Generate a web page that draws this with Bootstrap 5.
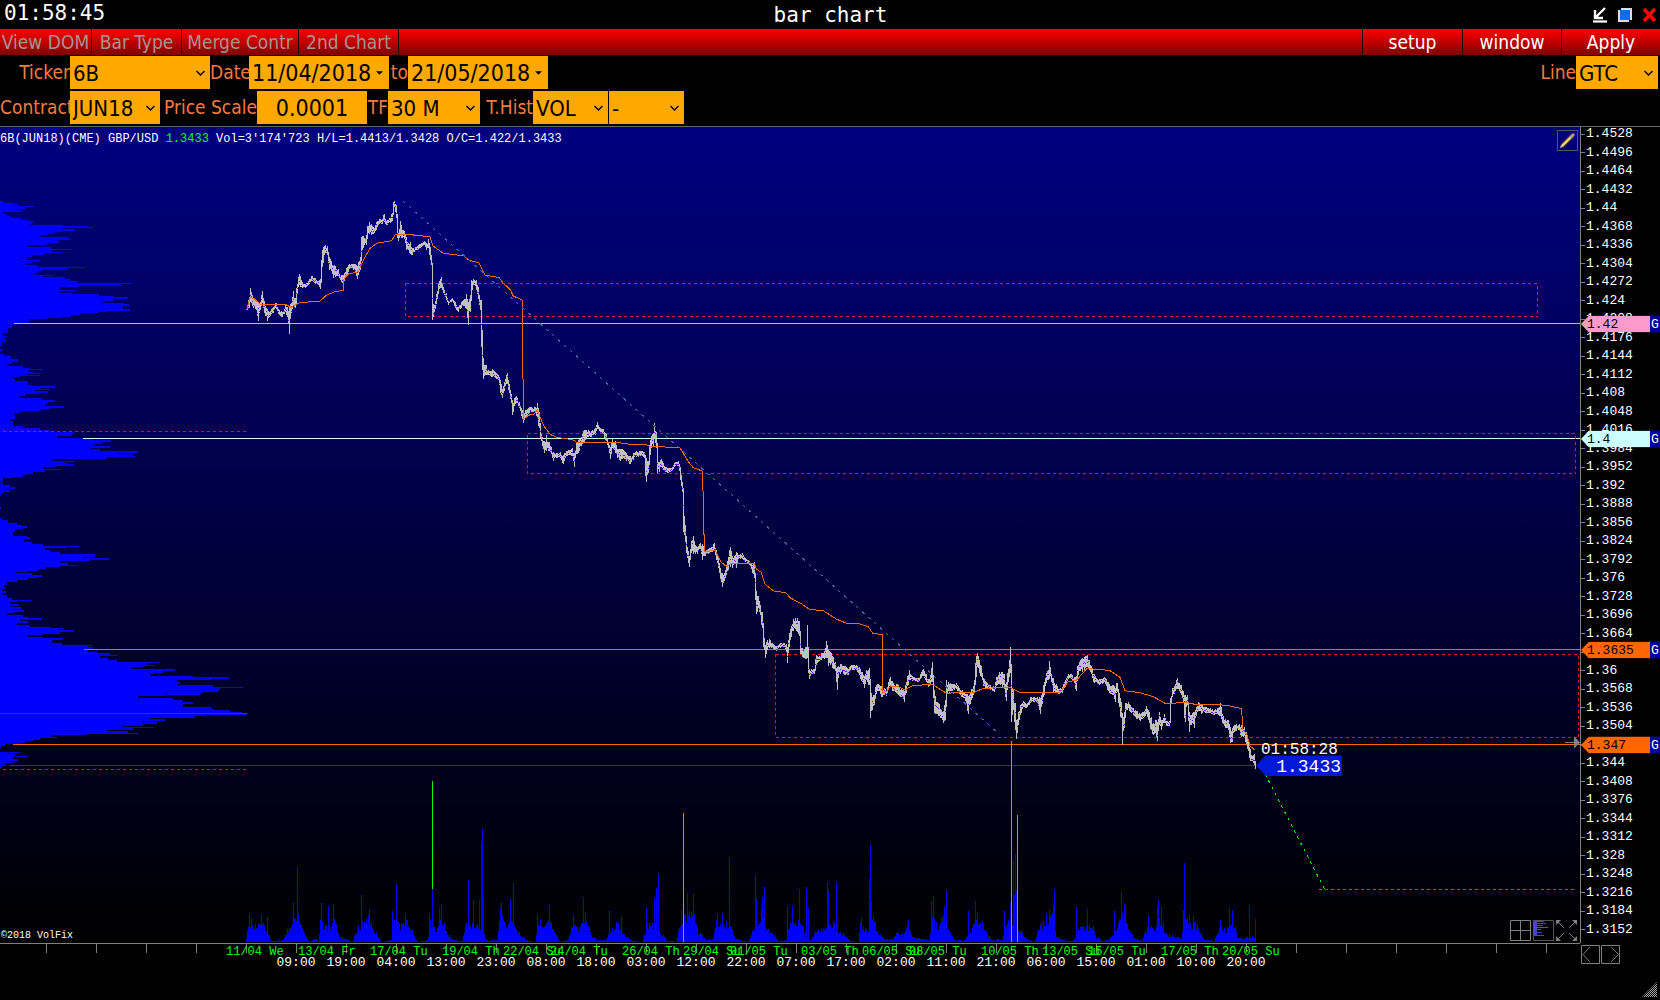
<!DOCTYPE html>
<html lang="en">
<head>
<meta charset="utf-8">
<meta name="viewport" content="width=device-width, initial-scale=1">
<title>bar chart</title>
<link href="https://cdn.jsdelivr.net/npm/bootstrap@5.3.0/dist/css/bootstrap.min.css" rel="stylesheet">
<style>
:root{--ui:"DejaVu Sans Condensed","Noto Sans",sans-serif;--mono:"Liberation Mono",monospace}
body{background:#000;color:#fff;font-family:var(--ui);font-size:19px;line-height:26px;overflow:hidden}
.title-bar{height:29px;font-family:"DejaVu Sans Mono",monospace;font-size:21px;line-height:27px}
.title-bar h1{font-size:21px;font-weight:400;line-height:30px}
.title-side{flex:1 1 0}
.win-btns{gap:10px;padding-right:3px}
.win-btn{background:none;border:0;padding:0;width:15px;height:16px;line-height:0}
.menu-strip{height:26px;margin-bottom:1px;background:linear-gradient(#f00,#800000)}
.menu-strip .btn{border:0;border-radius:0;padding:0 1px;font-size:19px;line-height:25px;color:#a89494}
.menu-left .btn{border-right:1px solid #200}
.menu-right .btn{border-left:1px solid #200;color:#fff;width:99px}
.menu-right .btn:first-child{width:100px}
.m-view{width:92px}.m-type{width:90px}.m-merge{width:117px}.m-second{width:100px}
.tool-row{height:33px;margin-bottom:2px}
.tool-row label{color:#f47a42;line-height:33px;text-align:right;white-space:nowrap;flex:none}
.tool-row .form-select,.tool-row .form-control{flex:none;height:33px;border:0;border-radius:0;background-color:#ffa800;color:#000;font-size:23px;line-height:31px;padding:0 3px}
.tool-row .form-select{font-size:22px;padding-top:2px;background-image:url("data:image/svg+xml,%3Csvg xmlns='http://www.w3.org/2000/svg' viewBox='0 0 8 6'%3E%3Cpath d='M0 1l4 4 4-4' fill='none' stroke='%23000' stroke-width='1.4'/%3E%3C/svg%3E");background-size:9px 6px;background-position:right 5px center}
.tool-row .date-box{background-image:url("data:image/svg+xml,%3Csvg xmlns='http://www.w3.org/2000/svg' viewBox='0 0 8 4'%3E%3Cpath d='M0 0h8l-4 4z'/%3E%3C/svg%3E");background-repeat:no-repeat;background-size:7px 4px;background-position:right 6px center}
.tool-row .f-lead{width:70px}
.tool-row .f-contract{width:90px}
.tool-row .f-wide{width:140px}
.tool-row .f-scale{width:110px}
.tool-row .f-frame{width:92px}
.tool-row .f-hist{width:75px}
.tool-row .f-line{width:82px;margin-right:2px}
.l-date{width:39px}.l-to{width:19px}.l-scale{width:97px}.l-tf{width:21px}.l-hist{width:53px}
.hist-pair{gap:1px}
.chart-zone{border-top:1px solid #666;font-family:var(--mono)}
.plot{background:linear-gradient(#000080,#000)}
.plot>svg{display:block;position:absolute;inset:0;width:100%;height:100%}
.info-line{position:absolute;left:0;top:5px;font-size:12px;line-height:14px;white-space:pre}
.edit-btn{position:absolute;right:2px;top:3px;width:21px;height:21px;padding:0;border:1px solid #555;background:none;line-height:0}
.copy-line{position:absolute;left:1px;bottom:1px;font-size:10px;line-height:12px}
.view-btns{position:absolute;right:3px;bottom:2px;gap:2px}
.view-btns button,.nav-btns button{border:0;background:none;padding:0;line-height:0}
.last-price{position:absolute;transform:translateY(-50%);width:86px;height:21px;background:#0018d8;clip-path:polygon(0 50%,10px 0,100% 0,100% 100%,10px 100%);font-size:18px;line-height:22px;text-align:right;padding-right:1px}
.last-time{position:absolute;transform:translateY(-100%);font-size:16px;line-height:13px}
.price-scale{width:80px;flex:none;border-left:1px solid #808080;font-size:13px;line-height:12px}
.price-list{height:100%;padding:1px 0 7px}
.price-list li{height:12px;display:flex;align-items:center}
.price-list li::before{content:"";width:4px;height:1px;background:#808080;margin-right:1px}
.price-tag{position:absolute;left:0;right:0;height:17px;transform:translateY(-50%);line-height:18px;color:#000}
.price-tag b{flex:1;font-weight:400;padding-left:6px;clip-path:polygon(0 50%,8px 0,100% 0,100% 100%,8px 100%)}
.price-tag i{width:10px;font-style:normal;background:#000099;color:#fff;padding-left:1px}
.time-zone{height:57px}
.time-scale{border-top:1px solid #808080}
.time-scale span{position:absolute;line-height:12px;white-space:nowrap}
.time-scale .tick{top:0;width:1px;height:9px;background:#808080}
.time-scale .day{top:2px;font-size:12px;color:#0f0}
.time-scale .hour{top:13px;font-size:13px;transform:translateX(-50%)}
.nav-btns{width:80px;flex:none;padding:2px 0 0 1px;gap:1px}
.grip{position:absolute;right:3px;bottom:3px}
</style>
</head>
<body>
<div class="vh-100 d-flex flex-column">
  <header>
    <div class="title-bar d-flex">
      <div class="title-side ps-1">01:58:45</div>
      <h1 class="m-0">bar chart</h1>
      <div class="title-side win-btns d-flex justify-content-end align-items-center">
        <button class="win-btn" aria-label="Minimize"><svg width="15" height="16" viewBox="0 0 15 16"><path d="M13 1L4 10M3 3v8h8" fill="none" stroke="#fff" stroke-width="2.4"/><path d="M1 14.5h14" stroke="#fff" stroke-width="2.2"/></svg></button>
        <button class="win-btn" aria-label="Maximize"><svg width="15" height="16" viewBox="0 0 15 16"><path d="M4 1h11v12h-3v2H1V3h3z" fill="#ddd"/><path d="M3 3h10v10H3z" fill="#0a6cff"/></svg></button>
        <button class="win-btn" aria-label="Close"><svg width="15" height="16" viewBox="0 0 15 16"><path d="M2 2l11 12M13 2L2 14" stroke="#f00" stroke-width="3.4"/></svg></button>
      </div>
    </div>
    <nav class="menu-strip d-flex justify-content-between">
      <div class="menu-left d-flex">
        <button class="btn m-view">View DOM</button><button class="btn m-type">Bar Type</button><button class="btn m-merge">Merge Contr</button><button class="btn m-second">2nd Chart</button>
      </div>
      <div class="menu-right d-flex"><button class="btn">setup</button><button class="btn">window</button><button class="btn">Apply</button></div>
    </nav>
    <div class="tool-row d-flex">
      <label class="f-lead" for="ticker">Ticker</label><select id="ticker" class="form-select f-wide"><option>6B</option></select>
      <label class="l-date" for="from">Date</label><input id="from" class="form-control date-box f-wide" value="11/04/2018">
      <label class="l-to" for="till">to</label><input id="till" class="form-control date-box f-wide" value="21/05/2018">
      <label class="ms-auto" for="line">Line</label><select id="line" class="form-select f-line"><option>GTC</option></select>
    </div>
    <div class="tool-row d-flex">
      <label class="f-lead" for="contract">Contract</label><select id="contract" class="form-select f-contract"><option>JUN18</option></select>
      <label class="l-scale" for="scale">Price Scale</label><input id="scale" class="form-control f-scale text-center" value="0.0001">
      <label class="l-tf" for="tf">TF</label><select id="tf" class="form-select f-frame"><option>30 M</option></select>
      <label class="l-hist" for="hist">T.Hist</label>
      <div class="hist-pair d-flex"><select id="hist" class="form-select f-hist"><option>VOL</option></select><select aria-label="Second histogram" class="form-select f-hist"><option>-</option></select></div>
    </div>
  </header>
  <main class="chart-zone flex-grow-1 d-flex flex-column">
    <div class="flex-grow-1 d-flex">
      <section class="plot flex-grow-1 position-relative">
        <svg id="chart" viewBox="0 127 1580 816" preserveAspectRatio="none" shape-rendering="crispEdges" fill="none">
          <path id="profile" fill="#00f"/>
          <path id="volume" stroke="#00f"/>
          <path d="M247 713.5H0" stroke="#8000e0"/>
          <g stroke="#f00" stroke-dasharray="3 3"><path d="M3 431.5H247M3 769.5H247"/></g>
          <path d="M9 765.5H1256" stroke="#3a3a3a"/>
          <path d="M14 323.5H1580" stroke="#ff99cc"/>
          <path d="M83 438.5H1580" stroke="#ccffff"/>
          <path d="M84 649.5H1580M13 744.5H1580" stroke="#f60"/>
          <g stroke-dasharray="3 3">
            <path d="M405.500 283.500H1537.500V316.500H405.500z" stroke="#f06"/>
            <path d="M527.500 433.500H1575.500V473.500H527.500z" stroke="#f0004c"/>
            <path d="M775.500 654.500H1578.500V737.500H775.500z" stroke="#f02"/>
          </g>
          <path id="bars" stroke="#c0c0c0"/>
          <path id="closes" stroke="#8000ff"/>
          <path id="vwap" stroke="#f60"/>
          <path d="M403 201L999 734" stroke="#3f68b8" stroke-dasharray="3 5"/>
          <path d="M432.500 781V889M683.500 813V942M1011.500 741V942M1017.500 815V942" stroke="#0f0"/>
          <path d="M1262 768L1325 890" stroke="#0f0" stroke-dasharray="3 4"/>
          <path d="M1319 889.500H1574" stroke="#f0f" stroke-dasharray="3 3"/>
          <path d="M1565 742.500H1574" stroke="#808080"/><path d="M1574 737l6 5.500l-6 5.500z" fill="#808080"/>
        </svg>
        <div class="info-line">6B(JUN18)(CME) GBP/USD <span style="color:#0f0">1.3433</span> Vol=3'174'723 H/L=1.4413/1.3428 O/C=1.422/1.3433</div>
        <button class="edit-btn" aria-label="Draw"><svg width="19" height="19" viewBox="0 0 19 19"><path d="M4 15L15 4" stroke="#6b4c1c" stroke-width="4"/><path d="M4 15L14 5" stroke="#ffe070" stroke-width="2"/><path d="M12 5l2 2" stroke="#7ac" stroke-width="2"/><path d="M14 3l2 2" stroke="#e08080" stroke-width="3"/><path d="M2 17l1-3 2 2z" fill="#ccc"/></svg></button>
        <div class="last-time" id="lastTime">01:58:28</div>
        <div class="last-price" id="lastPrice">1.3433</div>
        <div class="copy-line">©2018 VolFix</div>
        <div class="view-btns d-flex">
          <button aria-label="Grid"><svg width="21" height="21" viewBox="0 0 21 21" fill="none" stroke="#808080"><path d="M.5.5h20v20H.5zM10.500 0v21M0 10.500h21"/></svg></button>
          <button aria-label="Profile"><svg width="21" height="21" viewBox="0 0 21 21"><path d="M.5.5h20v20H.5z" fill="none" stroke="#555"/><path d="M1 1h3v15H1zM1 1h10v1H1zM1 3h12v1H1zM1 5h9v1H1zM1 9h7v1H1zM1 12h8v1H1zM1 15h10v1H1z" fill="#4444cc"/><path d="M1 7.500h14" stroke="#f22"/></svg></button>
          <button aria-label="Expand"><svg width="21" height="21" viewBox="0 0 21 21"><path d="M1 1l7 7M20 1l-7 7M1 20l7-7M20 20l-7-7" stroke="#808080"/><path d="M0 0h5L0 5zM21 0h-5l5 5zM0 21h5l-5-5zM21 21h-5l5-5z" fill="#808080"/></svg></button>
        </div>
      </section>
      <aside class="price-scale position-relative">
        <ul id="prices" class="price-list list-unstyled m-0 d-flex flex-column justify-content-between"></ul>
        <div id="tags"></div>
      </aside>
    </div>
    <div class="time-zone d-flex position-relative">
      <div id="times" class="time-scale flex-grow-1 position-relative"></div>
      <div class="nav-btns d-flex align-items-start">
        <button aria-label="Back"><svg width="19" height="19" viewBox="0 0 19 19" fill="none" stroke="#808080"><path d="M.5.5h18v18H.5zM9 2L2 9.500 9 17"/></svg></button>
        <button aria-label="Forward"><svg width="19" height="19" viewBox="0 0 19 19" fill="none" stroke="#808080"><path d="M.5.5h18v18H.5zM10 2l7.500 7.500L10 17"/></svg></button>
      </div>
      <svg class="grip" width="15" height="15" viewBox="0 0 15 15"><defs><pattern id="dots" width="2" height="2" patternUnits="userSpaceOnUse"><path d="M0 0h1v1H0zM1 1h1v1H1z" fill="#aaa"/></pattern></defs><path d="M15 0v15H0z" fill="url(#dots)"/></svg>
    </div>
  </main>
</div>
<script src="https://cdn.jsdelivr.net/npm/bootstrap@5.3.0/dist/js/bootstrap.bundle.min.js"></script>
<script>
const $=id=>document.getElementById(id);
const nums=s=>s.trim().split(/[\s;]+/).map(p=>p.split(/[:,]/).map(Number));
let seed=7;const rnd=()=>(seed=(seed*16807)%2147483647)/2147483647;

// volume by price: row offset : width, in thirds of a pixel across
const prof=nums(`56:8 59:12 62:40 64:54 66:40 69:102 72:75 76:48 80:64 84:10 90:20 96:30 98:40 100:62 105:85 109:102 112:95 116:90 119:190 122:262 124:280 127:185 130:226 134:185 138:165 143:140 145:120 150:204 155:214 158:175 163:180 166:140 172:85 176:152 181:216 185:155 189:186 192:135 196:96 202:60 206:80 210:120 213:75 216:100 219:78 223:115 228:255 232:205 235:130 240:115 244:105 248:160 251:130 254:195 260:210 264:235 269:396 273:362 277:235 281:180 286:175 289:230 292:180 296:210 299:297 305:340 308:385 312:340 317:310 322:372 325:388 330:365 334:370 338:390 342:325 346:295 349:240 354:210 358:185 362:140 365:90 369:70 371:88 374:60 377:42 380:36 388:24 396:25 402:10 408:20 412:15 418:18 424:5 430:5 436:0 443:5 448:0 455:12 462:32 470:54 476:35 481:22 486:70 491:90 495:130 498:85 502:100 505:120 508:80 510:120 513:60 517:40 520:45 526:82 530:85 536:95 540:165 544:120 546:150 549:105 553:144 557:115 561:75 565:60 570:125 575:165 580:145 586:135 591:192 596:150 600:120 604:60 610:42 618:45 626:30 632:40 640:40 645:70 650:120 655:150 660:222 664:215 670:170 674:250 678:280 681:332 686:305 692:283 697:330 700:272 705:300 710:413 714:352 718:400 722:406 726:320 730:155 734:222 738:190 740:205 743:222 748:165 752:130 757:183 760:135 765:100 768:78 771:70 776:40 780:10 786:8 790:0 794:10 798:30 803:46 808:12 811:30 816:8 822:3 826:0 856:4 860:0 885:5 890:25 896:52 902:65 906:80 910:70 914:45 920:38 926:40 930:80 935:90 940:72 946:95 951:130 957:237 960:200 963:135 968:150 972:180 977:287 982:285 985:245 989:327 993:270 997:180 1002:205 1007:230 1010:180 1013:138 1018:115 1022:85 1025:45 1029:95 1034:126 1038:110 1042:85 1047:50 1052:20 1058:12 1064:16 1070:5 1075:18 1080:5 1086:20 1092:35 1098:96 1101:50 1104:30 1109:58 1113:30 1117:62 1121:40 1125:72 1130:42 1133:20 1137:70 1142:85 1146:127 1150:60 1154:85 1158:50 1163:90 1168:150 1171:192 1174:170 1178:222 1182:180 1186:130 1190:85 1194:125 1199:190 1203:155 1207:155 1212:185 1215:275 1219:265 1222:280 1226:250 1230:265 1235:290 1238:330 1242:354 1246:300 1250:325 1254:350 1260:477 1264:440 1267:465 1270:430 1274:395 1279:525 1284:490 1288:465 1293:450 1298:580 1300:687 1304:635 1308:530 1312:540 1317:530 1321:640 1325:728 1329:660 1333:655 1338:610 1342:600 1346:500 1350:415 1354:520 1360:545 1366:580 1371:550 1375:545 1378:632 1382:640 1386:690 1391:725 1395:740 1398:620 1402:585 1406:450 1410:495 1414:425 1418:470 1422:430 1427:370 1430:460 1434:400 1437:320 1441:385 1445:415 1448:260 1452:155 1456:170 1459:120 1464:100 1468:75 1472:60 1476:15 1479:3 1484:0 1495:60 1498:20 1502:45 1506:85 1510:40 1515:55 1518:20 1521:42 1524:15 1529:20 1533:5 1537:0`);
let d='M0 201';
prof.forEach(([y,w])=>{const yy=Math.round(180+(y-1)/2.613);d+=`V${yy}H${Math.round(w/3)}`});
$('profile').setAttribute('d',d+'H0z');

// price bars: time, middle, half range
const seg=(ox,oy,s)=>nums(s).map(([x,y,a])=>[ox+x/3,oy+y/3,(a||0)/3]);
const mid=[...seg(230,180,`50,388,5 57,370,15 62,342,18 70,370,15 78,375,15 84,395,28 92,378,12 96,350,18 103,380,18 112,405,18 120,400,8 130,390,8 138,378,10 148,398,8 158,404,8 166,385,12 172,395,15 179,422,40 184,385,15 190,355,22 196,370,15 200,350,25 204,305,15 209,298,16 216,315,10 225,318,6 235,310,6 245,295,8 255,303,8 265,308,6 272,312,14 275,270,30 279,225,25 284,212,14 292,212,14 297,250,20 303,258,15 310,275,18 317,275,16 325,278,10 333,295,10 341,297,12 350,275,12 358,260,8 367,258,6 375,265,12 383,278,20 390,250,20 395,200,30 400,185,18 408,180,14 413,155,18 418,143,18 424,148,16 432,152,8 440,138,12 448,125,8 456,125,8 462,115,12 470,128,6 480,122,8 487,110,12 490,85,18 494,72,10 498,95,20 501,150,25 506,170,12 512,145,22 518,162,12 524,165,12 530,190,20 537,205,14 542,205,18 548,215,10 556,208,6 566,203,7 575,195,6 583,190,6 590,200,10 596,190,14 600,220,20 605,245,10 608,350,70 611,400,12 615,375,12 621,345,12 627,315,12 633,308,16 640,330,10 648,350,10 656,368,6 666,360,5 676,375,8 684,388,8 694,375,8 702,368,10 708,365,22 715,400,35 720,370,25 725,320,20 731,306,10 738,315,14 744,340,18 750,375,14 754,430,70 757,520,50 760,578,18 768,570,14 776,577,8 786,580,12 796,585,8 806,592,8 812,620,20 818,640,14 824,620,14 831,595,16 837,625,14 843,655,14 848,685,20 854,665,12 860,658,10 868,675,10 875,695,12 881,715,14 888,700,10 898,690,8 908,690,7 917,690,10 922,690,22 927,720,25 932,755,20 937,785,14 943,800,18 950,790,24 957,800,14 963,812,10 970,830,14 978,826,8 990,825,8 1000,838,14 1010,820,8 1020,818,8 1027,815,12 1033,840,20 1039,805,16 1046,800,20 1053,785,14 1060,770,18 1067,765,14 1075,760,10 1085,762,8 1095,755,10 1103,737,10 1112,752,8 1120,755,8 1128,772,10 1135,795,10 1141,820,18 1148,790,14 1155,800,18 1162,820,14 1170,825,18 1180,822,12 1190,830,12 1200,840,12 1210,830,10 1220,822,8 1232,820,8 1243,825,10 1248,870,35 1254,860,18 1259,820,25 1264,785,18 1270,780,20 1274,750,22 1278,780,25 1282,850,30 1288,860,15 1294,850,12 1304,865,8 1315,872,8 1326,868,6 1336,852,6 1346,850,8 1352,880,20 1356,920,15`),
...seg(500,380,`551,400,55 555,460,25 560,500,20 565,530,18 569,545,16 574,500,16 580,495,28 586,508,14 592,512,10 600,498,8 608,515,24 614,520,8 624,515,8 634,508,8 644,500,12 650,525,15 656,550,15 661,580,16 668,600,20 674,590,12 680,570,14 686,550,20 690,530,30 697,545,18 704,540,12 709,540,24 716,532,6 726,528,8 736,540,5 746,545,5 755,558,10 762,570,25 766,620,40 769,680,22 775,665,18 781,690,16 786,720,25 791,770,30 796,815,20 802,795,14 810,790,10 820,800,8 830,805,7 840,797,7 852,795,7 860,805,12 863,825,24 867,780,20 873,755,16 880,735,18 886,730,16 892,735,20 897,745,22 900,800,22 906,818,14 912,820,14 918,820,18 921,785,50 924,860,20 928,885,12 935,875,8 942,875,8 949,840,14 956,838,8 965,830,10 973,825,12 980,808,26 985,835,24 991,835,20 998,845,18 1005,860,14 1011,895,34 1016,875,18 1024,865,12 1034,872,14 1044,876,8 1056,862,8 1068,862,8 1078,872,12 1085,890,14 1093,905,18 1100,885,14 1107,890,26`),
...seg(860,600,`31,310,45 36,310,20 42,300,14 48,268,14 56,262,10 64,275,16 72,275,10 80,280,8 86,255,10 92,245,14 100,262,12 108,265,14 116,270,14 124,280,12 132,290,16 138,262,16 144,240,16 149,225,14 156,235,8 166,240,6 176,240,6 184,225,10 190,218,10 198,235,12 206,248,12 212,240,14 216,215,30 220,260,35 224,310,30 230,325,18 237,330,18 244,342,12 250,350,18 256,330,30 260,265,26 268,265,14 278,262,10 288,258,8 296,268,10 306,280,10 316,292,10 325,315,28 330,295,18 337,280,14 343,260,20 348,200,32 353,180,20 358,200,20 364,215,16 370,245,12 380,255,8 390,262,8 402,268,8 410,245,14 418,235,18 425,235,18 432,245,22 438,275,28 443,245,25 447,205,25 451,180,40 455,290,75 460,300,30 465,350,40 470,388,28 475,355,20 482,330,14 490,312,10 500,318,6 512,300,8 522,298,8 532,300,8 540,318,24 546,295,16 553,265,20 559,235,15 564,225,14 569,210,28 575,235,12 580,255,20 588,265,14 597,275,8 607,270,8 615,250,10 625,230,8 634,230,8 642,240,10 648,250,22 652,215,16 659,200,14 666,195,20 673,190,20 681,182,18 688,195,14 694,210,12 702,235,14 712,245,8 722,245,8 734,238,8 744,260,14 752,270,12 760,270,16 765,285,20 771,262,14 777,300,20 783,330,25 787,402,34 792,360,25 797,325,16 804,315,10 812,325,10 820,335,10 830,345,12 840,352,10 850,345,8 860,330,12 866,345,14 873,370,20 880,388,18 887,380,20 892,395,28 898,355,20 905,375,14 913,355,14 920,370,8 928,370,8 932,320,25 937,275,12 944,270,12 951,250,16 958,260,12 964,270,14 970,290,16 975,325,40 982,300,15 988,365,30 995,360,15 1002,360,24 1008,335,14 1016,320,14 1026,328,12 1038,330,8 1050,332,8 1062,338,8 1074,335,10 1082,328,20 1088,355,14 1096,370,14 1104,375,16 1110,405,24 1116,405,20 1123,385,10 1134,382,8 1144,392,18 1152,395,14 1158,415,18 1165,435,18 1170,465,18 1177,475,8 1183,478,16 1187,498,10`)];
const at=(pts,x,k)=>{let i=1;while(i<pts.length-1&&pts[i][0]<x)i++;const a=pts[i-1],b=pts[i],t=Math.max(0,Math.min(1,(x-a[0])/(b[0]-a[0])));return a[k]+(b[k]-a[k])*t};
// the waypoint that falls inside a column keeps its full range
let bars='',dots='',prev=null;
for(let x=247;x<=1255;x++){
  const own=mid.find(p=>Math.floor(p[0])===x);
  const m=own?own[1]:at(mid,x+.5,1),a=own?own[2]:at(mid,x+.5,2);
  const f=()=>own?1:.45+.75*rnd();
  let hi=Math.round(m-a*f()),lo=Math.round(m+a*f());
  if(prev){hi=Math.min(hi,prev[1]);lo=Math.max(lo,prev[0])}
  if(lo<=hi+1)lo=hi+2;
  bars+=`M${x+.5} ${hi}V${lo}`;
  if(rnd()<.55){const c=Math.round(m+(rnd()-.5)*a);dots+=`M${x} ${c+.5}h1`}
  prev=[Math.round(m-a*.3),Math.round(m+a*.3)];
}
$('bars').setAttribute('d',bars);$('closes').setAttribute('d',dots);

const vwap=[...seg(230,180,`50,390 60,352 72,356 90,372 108,372 165,373 183,382 208,368 270,363 290,345 315,335 340,331 341,298 355,282 385,275 400,240 420,205 440,190 485,182 495,165 530,163 600,170 608,197 640,220 700,227 718,241 747,248 765,285 808,293 820,310 840,328 850,348 877,360 878,540 881,718 895,706 912,702 922,690 940,735 960,763 980,772 1028,779 1040,787 1160,787 1200,793 1250,794 1258,799 1350,803 1375,845 1390,863 1417,873`),
...seg(500,380,`608,332 610,333 613,516 645,510 662,545 680,560 692,550 762,550 770,568 784,577 795,613 822,633 858,638 870,653 905,672 928,688 970,692 1010,718 1040,730 1078,731 1105,740 1118,760 1147,764`),
...seg(860,600,`67,280 80,274 92,258 118,261 135,270 155,258 215,252 240,268 260,280 300,277 340,278 370,265 450,262 478,277 600,277 625,245 650,240 680,206 720,208 750,212 780,232 795,272 840,278 880,290 915,310 980,308 1005,313 1080,314 1110,318 1145,326 1148,390 1160,402 1170,438 1184,450`)];
$('vwap').setAttribute('d','M'+vwap.map(p=>p[0].toFixed(1)+' '+p[1].toFixed(1)).join('L'));

// volume by time
const env=nums(`246,3 249,25 255,18 261,20 267,15 271,1 283,2 287,15 293,20 298,30 302,15 306,6 309,0 316,4 318,0 320,25 326,15 335,25 339,5 345,3 352,0 357,15 363,20 368,25 373,15 378,6 381,0 391,2 393,25 400,20 408,25 413,8 417,0 427,2 430,20 437,15 442,28 447,10 453,2 462,1 466,18 475,20 481,15 486,2 497,2 500,28 506,18 513,30 518,10 526,2 535,0 538,22 545,15 550,25 555,8 560,0 568,3 571,18 580,15 585,30 591,8 597,2 606,2 610,12 618,20 624,8 633,1 642,0 647,18 654,20 659,12 666,2 676,0 680,20 687,30 693,30 698,12 706,2 713,3 716,22 725,20 731,18 735,4 740,2 748,0 752,12 757,15 762,35 766,18 773,8 778,1 786,2 790,25 795,20 800,22 804,12 809,3 811,2 816,14 820,12 824,18 830,22 836,18 843,8 850,1 858,0 860,18 866,12 873,25 878,10 884,3 893,3 897,10 903,8 907,18 913,6 922,3 929,2 932,25 938,15 944,30 949,12 954,2 965,2 969,12 975,20 982,20 988,6 993,2 1002,3 1006,20 1010,28 1020,12 1025,4 1034,0 1040,18 1048,22 1053,28 1056,6 1066,1 1074,2 1078,14 1085,15 1092,18 1096,6 1102,1 1110,4 1115,12 1122,30 1128,15 1134,4 1142,1 1147,18 1155,18 1161,28 1165,8 1174,6 1181,4 1184,25 1190,20 1198,18 1203,3 1214,1 1220,18 1226,12 1232,25 1237,6 1243,3 1252,6 1256,6`);
const spikes=Object.fromEntries(nums(`249,28 261,28 267,25 293,39 297,75 321,39 328,36 333,38 361,47 369,33 392,31 396,58 405,29 429,29 432,53 439,34 441,38 468,62 473,42 479,42 481,98 482,113 483,45 500,34 501,39 510,43 513,59 537,28 549,37 573,27 583,45 609,31 621,25 646,34 654,44 656,54 658,69 681,32 687,49 693,48 717,28 722,29 729,85 755,66 756,43 762,45 764,55 787,35 792,36 799,53 806,55 808,34 827,59 828,51 836,60 861,24 869,63 870,97 871,41 908,22 931,41 933,46 944,35 946,52 968,31 975,41 977,30 1004,31 1010,39 1013,81 1014,47 1015,88 1016,51 1046,29 1049,32 1053,37 1054,53 1076,35 1087,33 1114,31 1121,50 1124,38 1125,37 1148,26 1157,36 1158,42 1161,35 1183,32 1184,79 1189,27 1193,26 1220,22 1229,34 1232,32 1249,37 1255,23`));
let vol='';
for(let x=246;x<=1255;x++){const h=spikes[x]||Math.round(at(env,x,1)*(.6+.5*rnd()));if(h)vol+=`M${x+.5} 942V${942-h}`}
$('volume').setAttribute('d',vol);

// scales
const py=y=>((y-127)/816*100)+'%', px=x=>(x/1580*100)+'%';
for(let i=0;i<44;i++){const li=document.createElement('li');li.textContent=String(+(1.4528-i*.0032).toFixed(4));$('prices').append(li)}
[[1.42,324,'#ff99cc'],[1.4,439,'#ccffff'],[1.3635,650,'#ff6600'],[1.347,745,'#ff6600']].forEach(([p,y,c])=>{
  $('tags').insertAdjacentHTML('beforeend',`<div class="price-tag d-flex" style="top:${py(y)}"><b style="background:${c}">${p}</b><i>G</i></div>`)});
$('lastPrice').style.cssText=`left:${px(1256)};top:${py(765.5)}`;
$('lastTime').style.cssText=`left:${px(1261)};top:${py(757)}`;
let t='';
for(let x=46;x<1580;x+=50)t+=`<span class="tick" style="left:${px(x)}"></span>`;
'226:11/04 We|298:13/04 Fr|370:17/04 Tu|442:19/04 Th|503:22/04 Su|550:24/04 Tu|622:26/04 Th|683:29/04 Su|730:01/05 Tu|801:03/05 Th|862:06/05 Su|909:08/05 Tu|981:10/05 Th|1042:13/05 Su|1088:15/05 Tu|1161:17/05 Th|1222:20/05 Su'.split('|').forEach(s=>{const i=s.indexOf(':');t+=`<span class="day" style="left:${px(+s.slice(0,i))}">${s.slice(i+1)}</span>`});
'09 19 04 13 23 08 18 03 12 22 07 17 02 11 21 06 15 01 10 20'.split(' ').forEach((h,i)=>{t+=`<span class="hour" style="left:${px(296+50*i)}">${h}:00</span>`});
$('times').innerHTML=t;
</script>
</body>
</html>
